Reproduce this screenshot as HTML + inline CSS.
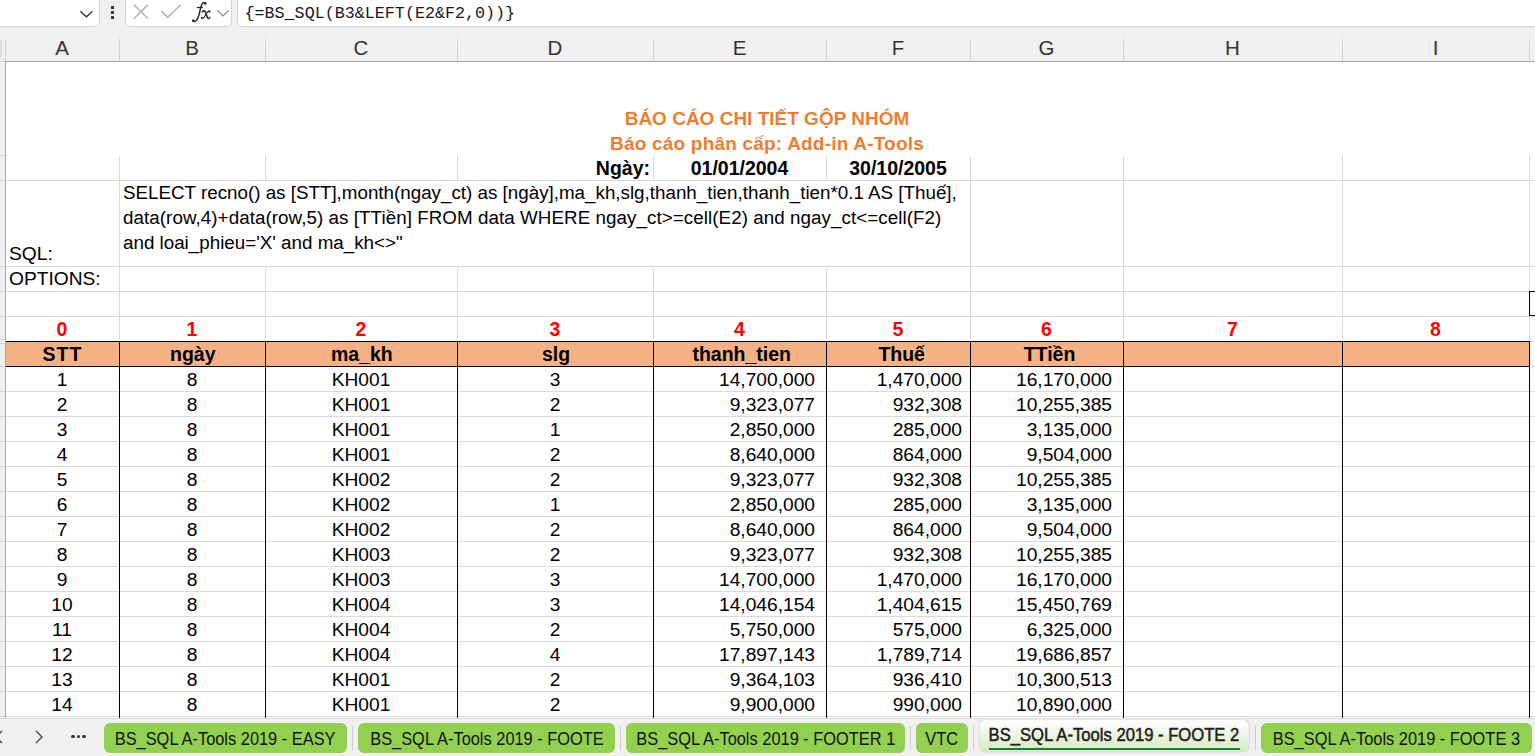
<!DOCTYPE html>
<html><head><meta charset="utf-8"><style>
html,body{margin:0;padding:0;}
body{width:1535px;height:756px;overflow:hidden;position:relative;background:#fff;font-family:"Liberation Sans",sans-serif;}
body>div,body>svg{position:absolute;}
.t{font-size:19.2px;line-height:25px;height:25px;white-space:pre;color:#000;}
.b{font-weight:bold;font-size:19.5px;}
.red{color:#ff0000;}
.title{font-weight:bold;color:#ed7d31;font-size:19px;}
.ch{width:100px;text-align:center;font-size:20.5px;line-height:24px;color:#333;}
.tab{top:723px;height:30px;background:#92d050;border-radius:6px;text-align:center;font-size:17.7px;line-height:32px;color:#111;white-space:pre;}
.tab span,.tabact span{display:inline-block;transform:scaleX(0.927);}
.tabact span{transform:scaleX(0.95);-webkit-text-stroke:0.5px #1e1e1e;}
.tabact{top:720px;height:30px;text-align:center;font-size:17.5px;line-height:30px;color:#222;white-space:pre;}
</style></head><body>
<div style="left:0px;top:0px;width:1535px;height:61px;background:#f0f0f0;"></div>
<div style="left:-10px;top:-6px;width:108px;height:31px;background:#fff;border:1px solid #d4d4d4;border-radius:6px"></div>
<svg style="left:78px;top:8px" width="18" height="12" viewBox="0 0 18 12"><path d="M2.2 3.3 L8.4 8.8 L14.5 3.3" fill="none" stroke="#333" stroke-width="1.3"/></svg>
<div style="left:111px;top:6px;width:3px;height:3px;background:#333;border-radius:0.5px"></div>
<div style="left:111px;top:11px;width:3px;height:3px;background:#333;border-radius:0.5px"></div>
<div style="left:111px;top:16px;width:3px;height:3px;background:#333;border-radius:0.5px"></div>
<div style="left:125px;top:-6px;width:105px;height:31px;background:#fff;border:1px solid #d4d4d4;border-radius:6px"></div>
<svg style="left:132px;top:3px" width="18" height="18" viewBox="0 0 18 18"><path d="M1.8 1.6 L16 15.8 M16 1.6 L1.8 15.8" fill="none" stroke="#b4b4b4" stroke-width="1.5"/></svg>
<svg style="left:159px;top:3px" width="24" height="18" viewBox="0 0 24 18"><path d="M2.2 8 L8.7 14.4 L21.5 1.7" fill="none" stroke="#b4b4b4" stroke-width="1.5"/></svg>
<svg style="left:185px;top:0px" width="30" height="26" viewBox="0 0 30 26"><path d="M20.6 3.6 C20 2.2 18.6 2.2 17.6 3.2 C16.3 4.6 15.7 7.5 14.9 11 C13.9 15.8 12.9 19.4 10.8 21 C9.6 21.9 8.3 21.6 7.9 20.8" fill="none" stroke="#2b2b2b" stroke-width="1.5" stroke-linecap="round"/><circle cx="20.3" cy="3.5" r="1.2" fill="#2b2b2b"/><circle cx="8.3" cy="20.5" r="1.2" fill="#2b2b2b"/><path d="M11.8 7.5 L17.9 7.5" stroke="#2b2b2b" stroke-width="1.3"/><path d="M17.3 11.6 C18.8 10.4 20.2 10.8 20.8 12.8 L22.2 17.2 C22.8 18.9 23.9 18.8 24.7 17.6" fill="none" stroke="#2b2b2b" stroke-width="1.6" stroke-linecap="round"/><path d="M24.8 11.3 C23.6 10.6 22.6 11.6 21.6 13.2 L19.4 16.8 C18.3 18.6 17.2 18.7 16.6 17.9" fill="none" stroke="#2b2b2b" stroke-width="1.1" stroke-linecap="round"/><circle cx="24.6" cy="11.4" r="1" fill="#2b2b2b"/><circle cx="16.8" cy="17.8" r="1" fill="#2b2b2b"/></svg>
<svg style="left:215px;top:7px" width="16" height="12" viewBox="0 0 16 12"><path d="M2.5 3.5 L8 9 L13.5 3.5" fill="none" stroke="#8a8a8a" stroke-width="1.2"/></svg>
<div style="left:237px;top:-6px;width:1320px;height:31px;background:#fff;border:1px solid #d4d4d4;border-radius:6px"></div>
<div style="left:244.5px;top:4px;font:16.72px 'Liberation Mono',monospace;color:#1a1a1a;line-height:20px;white-space:pre">{=BS_SQL(B3&amp;LEFT(E2&amp;F2,0))}</div>
<div class="ch" style="left:12.0px;top:36px">A</div>
<div class="ch" style="left:142.0px;top:36px">B</div>
<div class="ch" style="left:311.0px;top:36px">C</div>
<div class="ch" style="left:505.0px;top:36px">D</div>
<div class="ch" style="left:689.5px;top:36px">E</div>
<div class="ch" style="left:848.0px;top:36px">F</div>
<div class="ch" style="left:996.5px;top:36px">G</div>
<div class="ch" style="left:1182.5px;top:36px">H</div>
<div class="ch" style="left:1385.5px;top:36px">I</div>
<div style="left:119px;top:34px;width:1px;height:27px;background:linear-gradient(#f0f0f0,#d4d4d4 35%,#d4d4d4);"></div>
<div style="left:265px;top:34px;width:1px;height:27px;background:linear-gradient(#f0f0f0,#d4d4d4 35%,#d4d4d4);"></div>
<div style="left:457px;top:34px;width:1px;height:27px;background:linear-gradient(#f0f0f0,#d4d4d4 35%,#d4d4d4);"></div>
<div style="left:653px;top:34px;width:1px;height:27px;background:linear-gradient(#f0f0f0,#d4d4d4 35%,#d4d4d4);"></div>
<div style="left:826px;top:34px;width:1px;height:27px;background:linear-gradient(#f0f0f0,#d4d4d4 35%,#d4d4d4);"></div>
<div style="left:970px;top:34px;width:1px;height:27px;background:linear-gradient(#f0f0f0,#d4d4d4 35%,#d4d4d4);"></div>
<div style="left:1123px;top:34px;width:1px;height:27px;background:linear-gradient(#f0f0f0,#d4d4d4 35%,#d4d4d4);"></div>
<div style="left:1342px;top:34px;width:1px;height:27px;background:linear-gradient(#f0f0f0,#d4d4d4 35%,#d4d4d4);"></div>
<div style="left:1529px;top:34px;width:1px;height:27px;background:linear-gradient(#f0f0f0,#d4d4d4 35%,#d4d4d4);"></div>
<div style="left:5px;top:61px;width:1530px;height:1px;background:#a8a8a8;"></div>
<div style="left:0px;top:61px;width:5px;height:1px;background:#d6d6d6;"></div>
<div style="left:5px;top:34px;width:1px;height:27px;background:linear-gradient(#f0f0f0,#d4d4d4 35%,#d4d4d4);"></div>
<div style="left:0px;top:40px;width:2px;height:18px;background:#dcdcdc;"></div>
<div style="left:0px;top:62px;width:5px;height:656px;background:#f0f0f0;"></div>
<div style="left:5px;top:62px;width:1px;height:656px;background:#a8a8a8;"></div>
<div style="left:0px;top:155px;width:5px;height:1px;background:#d6d6d6;"></div>
<div style="left:0px;top:180px;width:5px;height:1px;background:#d6d6d6;"></div>
<div style="left:0px;top:266px;width:5px;height:1px;background:#d6d6d6;"></div>
<div style="left:0px;top:291px;width:5px;height:1px;background:#d6d6d6;"></div>
<div style="left:0px;top:316px;width:5px;height:1px;background:#d6d6d6;"></div>
<div style="left:0px;top:339px;width:5px;height:1px;background:#d6d6d6;"></div>
<div style="left:0px;top:343px;width:5px;height:1px;background:#d6d6d6;"></div>
<div style="left:0px;top:366px;width:5px;height:1px;background:#d6d6d6;"></div>
<div style="left:0px;top:391px;width:5px;height:1px;background:#d6d6d6;"></div>
<div style="left:0px;top:416px;width:5px;height:1px;background:#d6d6d6;"></div>
<div style="left:0px;top:441px;width:5px;height:1px;background:#d6d6d6;"></div>
<div style="left:0px;top:466px;width:5px;height:1px;background:#d6d6d6;"></div>
<div style="left:0px;top:491px;width:5px;height:1px;background:#d6d6d6;"></div>
<div style="left:0px;top:516px;width:5px;height:1px;background:#d6d6d6;"></div>
<div style="left:0px;top:541px;width:5px;height:1px;background:#d6d6d6;"></div>
<div style="left:0px;top:566px;width:5px;height:1px;background:#d6d6d6;"></div>
<div style="left:0px;top:591px;width:5px;height:1px;background:#d6d6d6;"></div>
<div style="left:0px;top:616px;width:5px;height:1px;background:#d6d6d6;"></div>
<div style="left:0px;top:641px;width:5px;height:1px;background:#d6d6d6;"></div>
<div style="left:0px;top:666px;width:5px;height:1px;background:#d6d6d6;"></div>
<div style="left:0px;top:691px;width:5px;height:1px;background:#d6d6d6;"></div>
<div style="left:0px;top:716px;width:5px;height:1px;background:#d6d6d6;"></div>
<div style="left:119px;top:156px;width:1px;height:24px;background:#dadada;"></div>
<div style="left:265px;top:156px;width:1px;height:24px;background:#dadada;"></div>
<div style="left:457px;top:156px;width:1px;height:24px;background:#dadada;"></div>
<div style="left:653px;top:156px;width:1px;height:24px;background:#dadada;"></div>
<div style="left:826px;top:156px;width:1px;height:24px;background:#dadada;"></div>
<div style="left:970px;top:156px;width:1px;height:24px;background:#dadada;"></div>
<div style="left:1123px;top:156px;width:1px;height:24px;background:#dadada;"></div>
<div style="left:1342px;top:156px;width:1px;height:24px;background:#dadada;"></div>
<div style="left:1529px;top:156px;width:1px;height:24px;background:#dadada;"></div>
<div style="left:6px;top:180px;width:1529px;height:1px;background:#dadada;"></div>
<div style="left:119px;top:180px;width:1px;height:86px;background:#dadada;"></div>
<div style="left:970px;top:180px;width:1px;height:86px;background:#dadada;"></div>
<div style="left:1123px;top:180px;width:1px;height:86px;background:#dadada;"></div>
<div style="left:1342px;top:180px;width:1px;height:86px;background:#dadada;"></div>
<div style="left:1529px;top:180px;width:1px;height:86px;background:#dadada;"></div>
<div style="left:6px;top:266px;width:1529px;height:1px;background:#dadada;"></div>
<div style="left:6px;top:291px;width:1529px;height:1px;background:#dadada;"></div>
<div style="left:6px;top:316px;width:1529px;height:1px;background:#dadada;"></div>
<div style="left:119px;top:266px;width:1px;height:75px;background:#dadada;"></div>
<div style="left:265px;top:266px;width:1px;height:75px;background:#dadada;"></div>
<div style="left:457px;top:266px;width:1px;height:75px;background:#dadada;"></div>
<div style="left:653px;top:266px;width:1px;height:75px;background:#dadada;"></div>
<div style="left:826px;top:266px;width:1px;height:75px;background:#dadada;"></div>
<div style="left:970px;top:266px;width:1px;height:75px;background:#dadada;"></div>
<div style="left:1123px;top:266px;width:1px;height:75px;background:#dadada;"></div>
<div style="left:1342px;top:266px;width:1px;height:75px;background:#dadada;"></div>
<div style="left:1529px;top:266px;width:1px;height:75px;background:#dadada;"></div>
<div style="left:6px;top:391px;width:1523px;height:1px;background:#dadada;"></div>
<div style="left:6px;top:416px;width:1523px;height:1px;background:#dadada;"></div>
<div style="left:6px;top:441px;width:1523px;height:1px;background:#dadada;"></div>
<div style="left:6px;top:466px;width:1523px;height:1px;background:#dadada;"></div>
<div style="left:6px;top:491px;width:1523px;height:1px;background:#dadada;"></div>
<div style="left:6px;top:516px;width:1523px;height:1px;background:#dadada;"></div>
<div style="left:6px;top:541px;width:1523px;height:1px;background:#dadada;"></div>
<div style="left:6px;top:566px;width:1523px;height:1px;background:#dadada;"></div>
<div style="left:6px;top:591px;width:1523px;height:1px;background:#dadada;"></div>
<div style="left:6px;top:616px;width:1523px;height:1px;background:#dadada;"></div>
<div style="left:6px;top:641px;width:1523px;height:1px;background:#dadada;"></div>
<div style="left:6px;top:666px;width:1523px;height:1px;background:#dadada;"></div>
<div style="left:6px;top:691px;width:1523px;height:1px;background:#dadada;"></div>
<div style="left:6px;top:716px;width:1523px;height:1px;background:#dadada;"></div>
<div style="left:1530px;top:341px;width:5px;height:1px;background:#dadada;"></div>
<div style="left:1530px;top:366px;width:5px;height:1px;background:#dadada;"></div>
<div style="left:1530px;top:391px;width:5px;height:1px;background:#dadada;"></div>
<div style="left:1530px;top:416px;width:5px;height:1px;background:#dadada;"></div>
<div style="left:1530px;top:441px;width:5px;height:1px;background:#dadada;"></div>
<div style="left:1530px;top:466px;width:5px;height:1px;background:#dadada;"></div>
<div style="left:1530px;top:491px;width:5px;height:1px;background:#dadada;"></div>
<div style="left:1530px;top:516px;width:5px;height:1px;background:#dadada;"></div>
<div style="left:1530px;top:541px;width:5px;height:1px;background:#dadada;"></div>
<div style="left:1530px;top:566px;width:5px;height:1px;background:#dadada;"></div>
<div style="left:1530px;top:591px;width:5px;height:1px;background:#dadada;"></div>
<div style="left:1530px;top:616px;width:5px;height:1px;background:#dadada;"></div>
<div style="left:1530px;top:641px;width:5px;height:1px;background:#dadada;"></div>
<div style="left:1530px;top:666px;width:5px;height:1px;background:#dadada;"></div>
<div style="left:1530px;top:691px;width:5px;height:1px;background:#dadada;"></div>
<div style="left:1530px;top:716px;width:5px;height:1px;background:#dadada;"></div>
<div style="left:6px;top:716px;width:1529px;height:1px;background:#dadada;"></div>
<div style="left:6px;top:717px;width:1529px;height:1px;background:#fff;"></div>
<div style="left:6px;top:342px;width:1523px;height:24px;background:#f4b183;"></div>
<div style="left:6px;top:341px;width:1524px;height:1px;background:#000;"></div>
<div style="left:6px;top:366px;width:1524px;height:1px;background:#000;"></div>
<div style="left:119px;top:341px;width:1px;height:377px;background:#000;"></div>
<div style="left:265px;top:341px;width:1px;height:377px;background:#000;"></div>
<div style="left:457px;top:341px;width:1px;height:377px;background:#000;"></div>
<div style="left:653px;top:341px;width:1px;height:377px;background:#000;"></div>
<div style="left:826px;top:341px;width:1px;height:377px;background:#000;"></div>
<div style="left:970px;top:341px;width:1px;height:377px;background:#000;"></div>
<div style="left:1123px;top:341px;width:1px;height:377px;background:#000;"></div>
<div style="left:1342px;top:341px;width:1px;height:377px;background:#000;"></div>
<div style="left:1529px;top:341px;width:1px;height:377px;background:#000;"></div>
<div style="left:1529px;top:291px;width:20px;height:23px;border:1px solid #000"></div>
<div class="t title" style="left:5px;width:1524px;top:105.5px;text-align:center">BÁO CÁO CHI TIẾT GỘP NHÓM</div>
<div class="t title" style="left:5px;width:1524px;top:130.5px;text-align:center;letter-spacing:0.2px">Báo cáo phân cấp: Add-in A-Tools</div>
<div class="t b" style="right:885px;top:156px;text-align:right;">Ngày:</div>
<div class="t b" style="left:439.5px;width:600px;top:156px;text-align:center;">01/01/2004</div>
<div class="t b" style="left:598px;width:600px;top:156px;text-align:center;">30/10/2005</div>
<div class="t" style="left:123px;top:181px;font-size:18.8px;line-height:24.75px;white-space:pre">SELECT recno() as [STT],month(ngay_ct) as [ngày],ma_kh,slg,thanh_tien,thanh_tien*0.1 AS [Thuế],
<span style="letter-spacing:0.06px">data(row,4)+data(row,5) as [TTiền] FROM data WHERE ngay_ct&gt;=cell(E2) and ngay_ct&lt;=cell(F2)</span>
and loai_phieu='X' and ma_kh&lt;&gt;"</div>
<div class="t " style="left:9px;top:241px;">SQL:</div>
<div class="t " style="left:9px;top:266px;">OPTIONS:</div>
<div class="t b red" style="left:-238.0px;width:600px;top:316.5px;text-align:center;">0</div>
<div class="t b red" style="left:-108.0px;width:600px;top:316.5px;text-align:center;">1</div>
<div class="t b red" style="left:61.0px;width:600px;top:316.5px;text-align:center;">2</div>
<div class="t b red" style="left:255.0px;width:600px;top:316.5px;text-align:center;">3</div>
<div class="t b red" style="left:439.5px;width:600px;top:316.5px;text-align:center;">4</div>
<div class="t b red" style="left:598.0px;width:600px;top:316.5px;text-align:center;">5</div>
<div class="t b red" style="left:746.5px;width:600px;top:316.5px;text-align:center;">6</div>
<div class="t b red" style="left:932.5px;width:600px;top:316.5px;text-align:center;">7</div>
<div class="t b red" style="left:1135.5px;width:600px;top:316.5px;text-align:center;">8</div>
<div class="t b" style="left:-237.5px;width:600px;top:342px;text-align:center;letter-spacing:1px;">STT</div>
<div class="t b" style="left:-107.19999999999999px;width:600px;top:342px;text-align:center;">ngày</div>
<div class="t b" style="left:61.89999999999998px;width:600px;top:342px;text-align:center;">ma_kh</div>
<div class="t b" style="left:256.0px;width:600px;top:342px;text-align:center;">slg</div>
<div class="t b" style="left:441.70000000000005px;width:600px;top:342px;text-align:center;">thanh_tien</div>
<div class="t b" style="left:601.7px;width:600px;top:342px;text-align:center;">Thuế</div>
<div class="t b" style="left:749.5px;width:600px;top:342px;text-align:center;">TTiền</div>
<div class="t " style="left:-238px;width:600px;top:367px;text-align:center;">1</div>
<div class="t " style="left:-108px;width:600px;top:367px;text-align:center;">8</div>
<div class="t " style="left:61px;width:600px;top:367px;text-align:center;">KH001</div>
<div class="t " style="left:255px;width:600px;top:367px;text-align:center;">3</div>
<div class="t " style="right:720px;top:367px;text-align:right;">14,700,000</div>
<div class="t " style="right:573px;top:367px;text-align:right;">1,470,000</div>
<div class="t " style="right:423px;top:367px;text-align:right;">16,170,000</div>
<div class="t " style="left:-238px;width:600px;top:392px;text-align:center;">2</div>
<div class="t " style="left:-108px;width:600px;top:392px;text-align:center;">8</div>
<div class="t " style="left:61px;width:600px;top:392px;text-align:center;">KH001</div>
<div class="t " style="left:255px;width:600px;top:392px;text-align:center;">2</div>
<div class="t " style="right:720px;top:392px;text-align:right;">9,323,077</div>
<div class="t " style="right:573px;top:392px;text-align:right;">932,308</div>
<div class="t " style="right:423px;top:392px;text-align:right;">10,255,385</div>
<div class="t " style="left:-238px;width:600px;top:417px;text-align:center;">3</div>
<div class="t " style="left:-108px;width:600px;top:417px;text-align:center;">8</div>
<div class="t " style="left:61px;width:600px;top:417px;text-align:center;">KH001</div>
<div class="t " style="left:255px;width:600px;top:417px;text-align:center;">1</div>
<div class="t " style="right:720px;top:417px;text-align:right;">2,850,000</div>
<div class="t " style="right:573px;top:417px;text-align:right;">285,000</div>
<div class="t " style="right:423px;top:417px;text-align:right;">3,135,000</div>
<div class="t " style="left:-238px;width:600px;top:442px;text-align:center;">4</div>
<div class="t " style="left:-108px;width:600px;top:442px;text-align:center;">8</div>
<div class="t " style="left:61px;width:600px;top:442px;text-align:center;">KH001</div>
<div class="t " style="left:255px;width:600px;top:442px;text-align:center;">2</div>
<div class="t " style="right:720px;top:442px;text-align:right;">8,640,000</div>
<div class="t " style="right:573px;top:442px;text-align:right;">864,000</div>
<div class="t " style="right:423px;top:442px;text-align:right;">9,504,000</div>
<div class="t " style="left:-238px;width:600px;top:467px;text-align:center;">5</div>
<div class="t " style="left:-108px;width:600px;top:467px;text-align:center;">8</div>
<div class="t " style="left:61px;width:600px;top:467px;text-align:center;">KH002</div>
<div class="t " style="left:255px;width:600px;top:467px;text-align:center;">2</div>
<div class="t " style="right:720px;top:467px;text-align:right;">9,323,077</div>
<div class="t " style="right:573px;top:467px;text-align:right;">932,308</div>
<div class="t " style="right:423px;top:467px;text-align:right;">10,255,385</div>
<div class="t " style="left:-238px;width:600px;top:492px;text-align:center;">6</div>
<div class="t " style="left:-108px;width:600px;top:492px;text-align:center;">8</div>
<div class="t " style="left:61px;width:600px;top:492px;text-align:center;">KH002</div>
<div class="t " style="left:255px;width:600px;top:492px;text-align:center;">1</div>
<div class="t " style="right:720px;top:492px;text-align:right;">2,850,000</div>
<div class="t " style="right:573px;top:492px;text-align:right;">285,000</div>
<div class="t " style="right:423px;top:492px;text-align:right;">3,135,000</div>
<div class="t " style="left:-238px;width:600px;top:517px;text-align:center;">7</div>
<div class="t " style="left:-108px;width:600px;top:517px;text-align:center;">8</div>
<div class="t " style="left:61px;width:600px;top:517px;text-align:center;">KH002</div>
<div class="t " style="left:255px;width:600px;top:517px;text-align:center;">2</div>
<div class="t " style="right:720px;top:517px;text-align:right;">8,640,000</div>
<div class="t " style="right:573px;top:517px;text-align:right;">864,000</div>
<div class="t " style="right:423px;top:517px;text-align:right;">9,504,000</div>
<div class="t " style="left:-238px;width:600px;top:542px;text-align:center;">8</div>
<div class="t " style="left:-108px;width:600px;top:542px;text-align:center;">8</div>
<div class="t " style="left:61px;width:600px;top:542px;text-align:center;">KH003</div>
<div class="t " style="left:255px;width:600px;top:542px;text-align:center;">2</div>
<div class="t " style="right:720px;top:542px;text-align:right;">9,323,077</div>
<div class="t " style="right:573px;top:542px;text-align:right;">932,308</div>
<div class="t " style="right:423px;top:542px;text-align:right;">10,255,385</div>
<div class="t " style="left:-238px;width:600px;top:567px;text-align:center;">9</div>
<div class="t " style="left:-108px;width:600px;top:567px;text-align:center;">8</div>
<div class="t " style="left:61px;width:600px;top:567px;text-align:center;">KH003</div>
<div class="t " style="left:255px;width:600px;top:567px;text-align:center;">3</div>
<div class="t " style="right:720px;top:567px;text-align:right;">14,700,000</div>
<div class="t " style="right:573px;top:567px;text-align:right;">1,470,000</div>
<div class="t " style="right:423px;top:567px;text-align:right;">16,170,000</div>
<div class="t " style="left:-238px;width:600px;top:592px;text-align:center;">10</div>
<div class="t " style="left:-108px;width:600px;top:592px;text-align:center;">8</div>
<div class="t " style="left:61px;width:600px;top:592px;text-align:center;">KH004</div>
<div class="t " style="left:255px;width:600px;top:592px;text-align:center;">3</div>
<div class="t " style="right:720px;top:592px;text-align:right;">14,046,154</div>
<div class="t " style="right:573px;top:592px;text-align:right;">1,404,615</div>
<div class="t " style="right:423px;top:592px;text-align:right;">15,450,769</div>
<div class="t " style="left:-238px;width:600px;top:617px;text-align:center;">11</div>
<div class="t " style="left:-108px;width:600px;top:617px;text-align:center;">8</div>
<div class="t " style="left:61px;width:600px;top:617px;text-align:center;">KH004</div>
<div class="t " style="left:255px;width:600px;top:617px;text-align:center;">2</div>
<div class="t " style="right:720px;top:617px;text-align:right;">5,750,000</div>
<div class="t " style="right:573px;top:617px;text-align:right;">575,000</div>
<div class="t " style="right:423px;top:617px;text-align:right;">6,325,000</div>
<div class="t " style="left:-238px;width:600px;top:642px;text-align:center;">12</div>
<div class="t " style="left:-108px;width:600px;top:642px;text-align:center;">8</div>
<div class="t " style="left:61px;width:600px;top:642px;text-align:center;">KH004</div>
<div class="t " style="left:255px;width:600px;top:642px;text-align:center;">4</div>
<div class="t " style="right:720px;top:642px;text-align:right;">17,897,143</div>
<div class="t " style="right:573px;top:642px;text-align:right;">1,789,714</div>
<div class="t " style="right:423px;top:642px;text-align:right;">19,686,857</div>
<div class="t " style="left:-238px;width:600px;top:667px;text-align:center;">13</div>
<div class="t " style="left:-108px;width:600px;top:667px;text-align:center;">8</div>
<div class="t " style="left:61px;width:600px;top:667px;text-align:center;">KH001</div>
<div class="t " style="left:255px;width:600px;top:667px;text-align:center;">2</div>
<div class="t " style="right:720px;top:667px;text-align:right;">9,364,103</div>
<div class="t " style="right:573px;top:667px;text-align:right;">936,410</div>
<div class="t " style="right:423px;top:667px;text-align:right;">10,300,513</div>
<div class="t " style="left:-238px;width:600px;top:692px;text-align:center;">14</div>
<div class="t " style="left:-108px;width:600px;top:692px;text-align:center;">8</div>
<div class="t " style="left:61px;width:600px;top:692px;text-align:center;">KH001</div>
<div class="t " style="left:255px;width:600px;top:692px;text-align:center;">2</div>
<div class="t " style="right:720px;top:692px;text-align:right;">9,900,000</div>
<div class="t " style="right:573px;top:692px;text-align:right;">990,000</div>
<div class="t " style="right:423px;top:692px;text-align:right;">10,890,000</div>
<div style="left:0px;top:718px;width:1535px;height:38px;background:#f0f0f0;"></div>
<div style="left:0px;top:718px;width:1535px;height:1px;background:#dcdcdc;"></div>
<svg style="left:-7px;top:729px" width="12" height="16" viewBox="0 0 12 16"><path d="M9 2 L3 8 L9 14" fill="none" stroke="#444" stroke-width="1.3"/></svg>
<svg style="left:33px;top:729px" width="12" height="16" viewBox="0 0 12 16"><path d="M3 2 L9 8 L3 14" fill="none" stroke="#444" stroke-width="1.3"/></svg>
<div style="left:71.2px;top:734.6px;width:3.8px;height:3.8px;border-radius:50%;background:#333"></div>
<div style="left:76.6px;top:734.6px;width:3.8px;height:3.8px;border-radius:50%;background:#333"></div>
<div style="left:82px;top:734.6px;width:3.8px;height:3.8px;border-radius:50%;background:#333"></div>
<div class="tab" style="left:104px;width:243px"><span>BS_SQL A-Tools 2019 - EASY</span></div>
<div class="tab" style="left:358px;width:257px"><span>BS_SQL A-Tools 2019 - FOOTE</span></div>
<div class="tab" style="left:626px;width:279px"><span>BS_SQL A-Tools 2019 - FOOTER 1</span></div>
<div class="tab" style="left:916px;width:52px"><span>VTC</span></div>
<div class="tab" style="left:1261px;width:271px"><span>BS_SQL A-Tools 2019 - FOOTE 3</span></div>
<div style="left:352px;top:726px;width:1px;height:24px;background:#cfcfcf;"></div>
<div style="left:620px;top:726px;width:1px;height:24px;background:#cfcfcf;"></div>
<div style="left:910px;top:726px;width:1px;height:24px;background:#cfcfcf;"></div>
<div style="left:973px;top:726px;width:1px;height:24px;background:#cfcfcf;"></div>
<div style="left:1255px;top:726px;width:1px;height:24px;background:#cfcfcf;"></div>
<div style="left:978px;top:718px;width:272px;height:35px;border-radius:7px;background:#e6e6e6"></div>
<div style="left:980px;top:720px;width:268px;height:32px;border-radius:6px;background:linear-gradient(#ffffff 0%,#f1f8ea 35%,#d2eabc 100%)"></div>
<div class="tabact" style="left:980px;width:268px"><span>BS_SQL A-Tools 2019 - FOOTE 2</span></div>
<div style="left:989px;top:748px;width:251px;height:2px;background:#107c41;"></div>
</body></html>
